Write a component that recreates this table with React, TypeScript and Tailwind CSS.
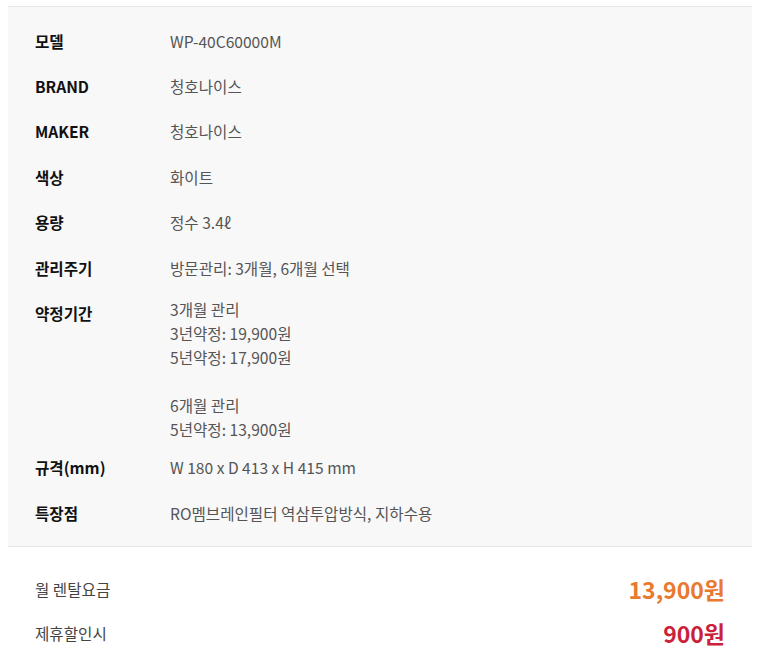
import { type FC } from 'react';

interface SpecRow {
    label: string;
    lines: string[];
}

const specs: SpecRow[] = [
    { label: '모델', lines: ['WP-40C60000M'] },
    { label: 'BRAND', lines: ['청호나이스'] },
    { label: 'MAKER', lines: ['청호나이스'] },
    { label: '색상', lines: ['화이트'] },
    { label: '용량', lines: ['정수 3.4ℓ'] },
    { label: '관리주기', lines: ['방문관리: 3개월, 6개월 선택'] },
    {
        label: '약정기간',
        lines: ['3개월 관리', '3년약정: 19,900원', '5년약정: 17,900원', '', '6개월 관리', '5년약정: 13,900원'],
    },
    { label: '규격(mm)', lines: ['W 180 x D 413 x H 415 mm'] },
    { label: '특장점', lines: ['RO멤브레인필터 역삼투압방식, 지하수용'] },
];

const App: FC = () => {
    return (
        <div className="min-h-screen bg-white pt-[6px] font-['Noto_Sans_CJK_KR','Noto_Sans',sans-serif] text-[15.6px]">
            <div className="mx-[8px] mr-[18px] border-y border-[#e6e6e6] bg-[#f8f8f8] px-[27px] py-[11px]">
                {specs.map((row) => (
                    <div key={row.label} className="flex py-[10.7px]">
                        <div className="w-[135px] shrink-0 font-bold leading-[24px] text-[#111]">{row.label}</div>
                        <div className={`text-[#555] leading-[24px] ${row.lines.length > 1 ? '-mt-[4px] -mb-[7px]' : ''}`}>
                            {row.lines.map((line, i) => (
                                <div key={i} className="h-[24px]">{line}</div>
                            ))}
                        </div>
                    </div>
                ))}
            </div>

            <div className="mx-[8px] mr-[18px] px-[27px] pt-[20px]">
                <div className="flex items-center justify-between h-[44px]">
                    <span className="text-[#444]">월 렌탈요금</span>
                    <span className="text-[23px] font-bold text-[#e8792f]">13,900원</span>
                </div>
                <div className="flex items-center justify-between h-[44px]">
                    <span className="text-[#444]">제휴할인시</span>
                    <span className="text-[23px] font-bold text-[#cc1f3c]">900원</span>
                </div>
            </div>
        </div>
    );
};

export default App;
